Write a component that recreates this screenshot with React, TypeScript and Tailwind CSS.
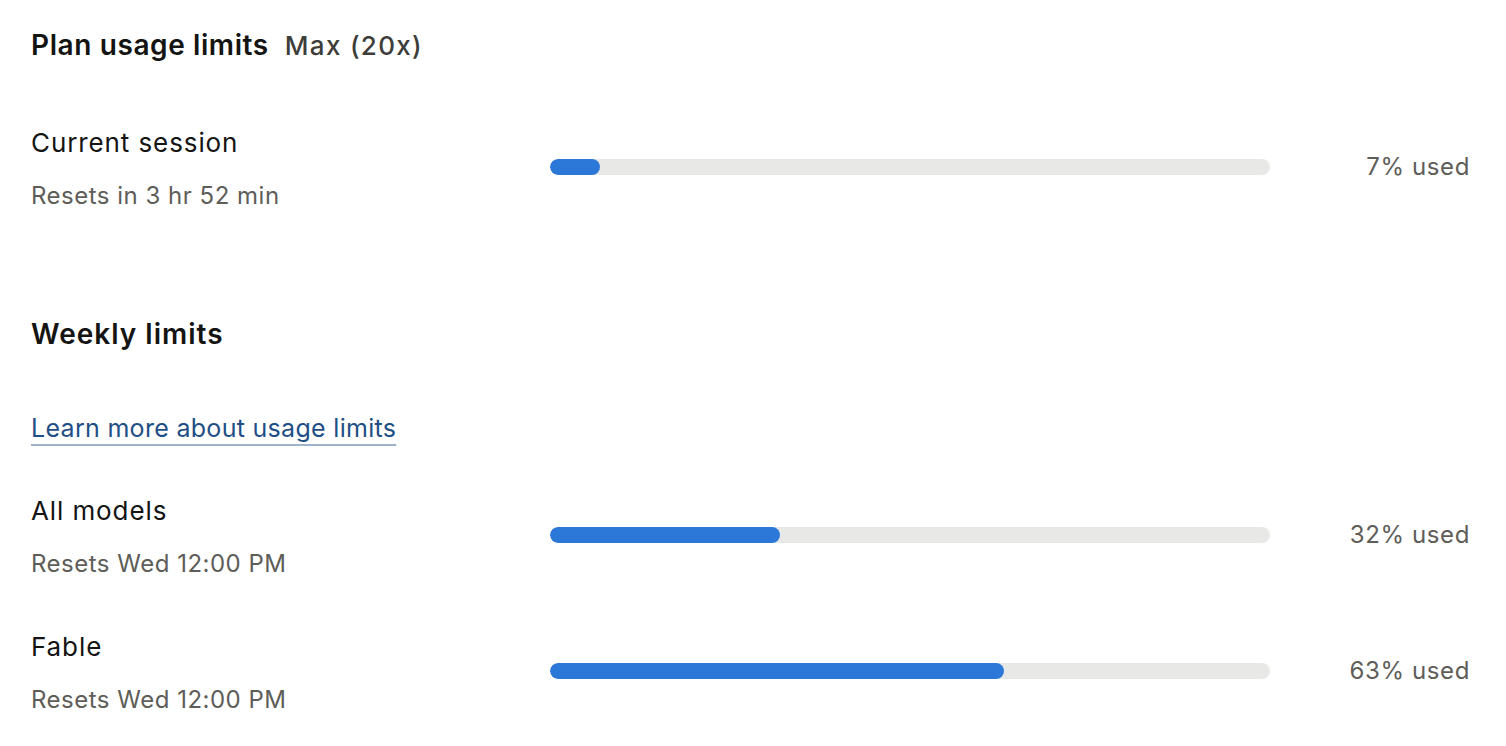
import React from "react";

interface UsageRowProps {
  label: string;
  resets: string;
  percent: number;
}

const UsageRow: React.FC<UsageRowProps> = ({ label, resets, percent }) => {
  return (
    <div className="flex items-start">
      <div className="w-[519px] shrink-0">
        <div className="text-[26px] leading-[32px] tracking-[0.9px] text-[#141413]">{label}</div>
        <div className="mt-[22px] text-[24px] leading-[30px] tracking-[0.5px] text-[#5e5d59]">
          {resets}
        </div>
      </div>
      <div className="mt-[32px] h-[16px] w-[720px] shrink-0 rounded-full bg-[#e8e8e6] overflow-hidden">
        <div
          className="h-full rounded-full bg-[#2c78d8]"
          style={{ width: `${percent}%` }}
        ></div>
      </div>
      <div className="mt-[25px] flex-1 text-right text-[24px] leading-[30px] tracking-[0.6px] text-[#5e5d59]">
        {percent}% used
      </div>
    </div>
  );
};

export default function App() {
  return (
    <div
      className="w-[1506px] h-[746px] bg-white pl-[31px] pr-[36px] pt-[27px]"
      style={{ fontFamily: "Inter, 'Noto Sans', sans-serif" }}
    >
      <div className="flex items-baseline gap-[16px] leading-[36px]">
        <h2 className="text-[28px] font-semibold tracking-[0.6px] text-[#141413]">
          Plan usage limits
        </h2>
        <span className="text-[26px] font-medium tracking-[1.3px] text-[#3d3d3a]">Max (20x)</span>
      </div>

      <div className="mt-[63px]">
        <UsageRow label="Current session" resets="Resets in 3 hr 52 min" percent={7} />
      </div>

      <h2 className="mt-[105px] text-[28px] leading-[36px] font-semibold tracking-[1px] text-[#141413]">
        Weekly limits
      </h2>

      <div className="mt-[60px] leading-[32px]">
        <a
          href="#"
          className="text-[25px] tracking-[0.3px] text-[#1f4f86] underline decoration-[#9fb3cc] decoration-[1.5px] underline-offset-[7px]"
        >
          Learn more about usage limits
        </a>
      </div>

      <div className="mt-[48px] flex flex-col gap-[52px]">
        <UsageRow label="All models" resets="Resets Wed 12:00 PM" percent={32} />
        <UsageRow label="Fable" resets="Resets Wed 12:00 PM" percent={63} />
      </div>
    </div>
  );
}
